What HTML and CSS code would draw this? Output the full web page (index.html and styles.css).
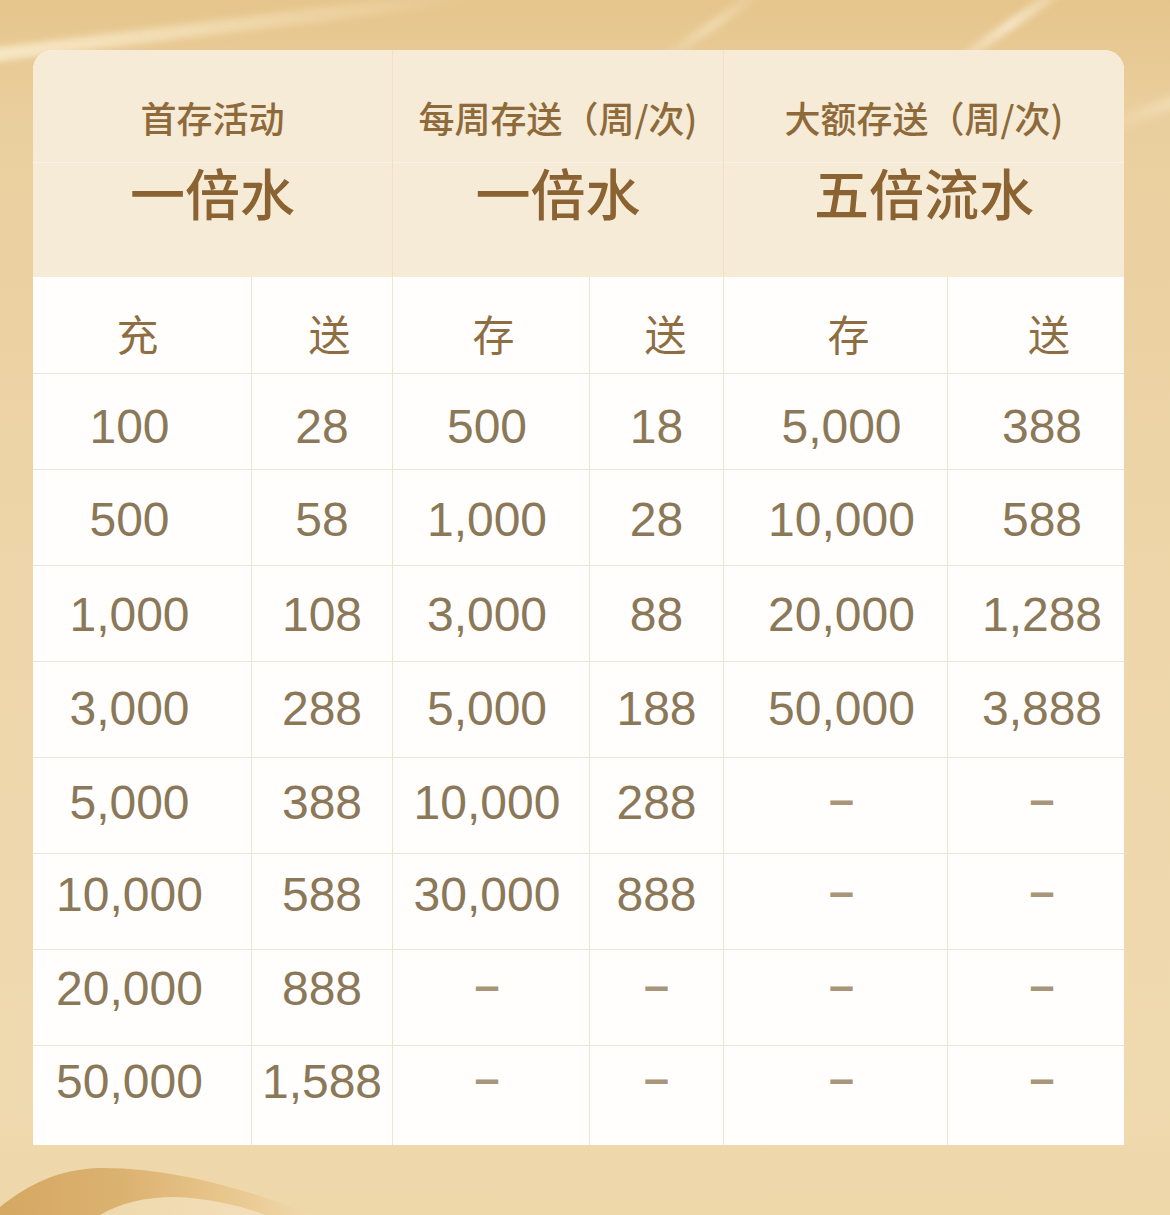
FILE: index.html
```html
<!DOCTYPE html>
<html lang="zh">
<head>
<meta charset="utf-8">
<link rel="stylesheet" href="styles.css">
</head>
<body>
<div class="page">
  <div class="streak s1"></div>
  <div class="streak s2"></div>
  <div class="streak s3"></div>
  <div class="streak s4"></div>
  <svg class="ribbon" width="340" height="60" viewBox="0 0 340 60">
    <defs>
      <linearGradient id="rg" x1="0" y1="0" x2="1" y2="0">
        <stop offset="0" stop-color="#d5a862"/>
        <stop offset="0.4" stop-color="#dcb271"/>
        <stop offset="0.75" stop-color="#e9c88f"/>
        <stop offset="1" stop-color="#f0d9ae"/>
      </linearGradient>
      <linearGradient id="rg2" x1="0" y1="0" x2="1" y2="0">
        <stop offset="0" stop-color="#efd8ac"/>
        <stop offset="1" stop-color="#f2dfba"/>
      </linearGradient>
    </defs>
    <path d="M0 52 C 30 28, 60 14, 100 13 C 170 12, 250 35, 312 60 L 0 60 Z" fill="url(#rg)"/>
    <path d="M100 60 C 120 48, 145 42, 175 42 C 210 43, 245 52, 265 60 Z" fill="url(#rg2)"/>
  </svg>

  <div class="card">
    <div class="head">
      <div class="group">
        <div class="label">首存活动</div>
        <div class="big">一倍水</div>
      </div>
      <div class="group">
        <div class="label">每周存送（周/次)</div>
        <div class="big">一倍水</div>
      </div>
      <div class="group">
        <div class="label">大额存送（周/次)</div>
        <div class="big">五倍流水</div>
      </div>
    </div>
    <div class="grid">
      <div class="row r0">
        <div class="c th c1">充</div><div class="c th c2">送</div><div class="c th c3">存</div><div class="c th c4">送</div><div class="c th c5">存</div><div class="c th c6">送</div>
      </div>
      <div class="row r1">
        <div class="c c1">100</div><div class="c c2">28</div><div class="c c3">500</div><div class="c c4">18</div><div class="c c5">5,000</div><div class="c c6">388</div>
      </div>
      <div class="row r2">
        <div class="c c1">500</div><div class="c c2">58</div><div class="c c3">1,000</div><div class="c c4">28</div><div class="c c5">10,000</div><div class="c c6">588</div>
      </div>
      <div class="row r3">
        <div class="c c1">1,000</div><div class="c c2">108</div><div class="c c3">3,000</div><div class="c c4">88</div><div class="c c5">20,000</div><div class="c c6">1,288</div>
      </div>
      <div class="row r4">
        <div class="c c1">3,000</div><div class="c c2">288</div><div class="c c3">5,000</div><div class="c c4">188</div><div class="c c5">50,000</div><div class="c c6">3,888</div>
      </div>
      <div class="row r5">
        <div class="c c1">5,000</div><div class="c c2">388</div><div class="c c3">10,000</div><div class="c c4">288</div><div class="c c5 d">–</div><div class="c c6 d">–</div>
      </div>
      <div class="row r6">
        <div class="c c1">10,000</div><div class="c c2">588</div><div class="c c3">30,000</div><div class="c c4">888</div><div class="c c5 d">–</div><div class="c c6 d">–</div>
      </div>
      <div class="row r7">
        <div class="c c1">20,000</div><div class="c c2">888</div><div class="c c3 d">–</div><div class="c c4 d">–</div><div class="c c5 d">–</div><div class="c c6 d">–</div>
      </div>
      <div class="row r8">
        <div class="c c1">50,000</div><div class="c c2">1,588</div><div class="c c3 d">–</div><div class="c c4 d">–</div><div class="c c5 d">–</div><div class="c c6 d">–</div>
      </div>
    </div>
  </div>
</div>
</body>
</html>
```

FILE: styles.css
```css
* { box-sizing: border-box; }
html, body { margin: 0; padding: 0; }
body {
  width: 1170px;
  height: 1215px;
  overflow: hidden;
  font-family: "Liberation Sans", "Noto Sans CJK SC", sans-serif;
}
.page {
  position: relative;
  width: 1170px;
  height: 1215px;
  padding: 50px 0 0 33px;
  background:
    linear-gradient(180deg, #e6c58c 0%, #eacf9e 10%, #eed6aa 50%, #efd9ae 90%, #eed7a9 100%);
}
.streak {
  position: absolute;
  pointer-events: none;
}
.s1 {
  left: -40px; top: 20px;
  width: 520px; height: 14px;
  transform: rotate(-7deg);
  background: linear-gradient(90deg, rgba(250,236,205,0.9), rgba(246,228,190,0.4) 70%, rgba(246,228,190,0));
  filter: blur(3px);
}
.s2 {
  left: 1090px; top: 100px;
  width: 140px; height: 14px;
  transform: rotate(-20deg);
  background: linear-gradient(90deg, rgba(248,232,200,0), rgba(248,232,200,0.8));
  filter: blur(3px);
}
.s3 {
  left: 920px; top: 20px;
  width: 180px; height: 10px;
  transform: rotate(-35deg);
  background: linear-gradient(90deg, rgba(248,232,200,0), rgba(248,234,205,0.85), rgba(248,232,200,0));
  filter: blur(3px);
}
.s4 {
  left: 640px; top: 22px;
  width: 140px; height: 10px;
  transform: rotate(-35deg);
  background: linear-gradient(90deg, rgba(248,232,200,0), rgba(246,230,196,0.6), rgba(248,232,200,0));
  filter: blur(3px);
}
.ribbon {
  position: absolute;
  left: 0; bottom: 0;
}
.card {
  position: relative;
  width: 1091px;
  border-radius: 20px 20px 0 0;
  overflow: hidden;
  background: #fffefc;
}
.head {
  display: grid;
  grid-template-columns: 360px 331px 400px;
  height: 227px;
  background: #f6ebd7;
}
.group {
  display: flex;
  flex-direction: column;
  align-items: center;
  border-right: 1px solid #efe1c6;
  font-family: "Noto Sans CJK SC", sans-serif;
}
.group:last-child { border-right: none; }
.label {
  width: 100%;
  text-align: center;
  height: 113px;
  padding-top: 44px;
  font-size: 36px;
  line-height: 46px;
  font-weight: 500;
  color: #8e6a3b;
  border-bottom: 1px solid #f9f2e6;
}
.big {
  font-size: 55px;
  line-height: 60px;
  font-weight: 500;
  color: #8b6332;
  margin-top: -2px;
}
.grid {
  display: grid;
  grid-template-columns: 219px 141px 197px 134px 224px 176px;
  grid-template-rows: 97px repeat(7, 96px) 99px;
}
.row { display: contents; }
.c {
  display: flex;
  align-items: center;
  justify-content: center;
  font-size: 48px;
  color: #8b7858;
  border-right: 1px solid #eee4d2;
  border-bottom: 1px solid #eee4d2;
}
.c6 { border-right: none; }
.r8 > .c { border-bottom: none; }
.c1 { padding-right: 25px; }
.c3 { padding-right: 8px; }
.c5 { padding-left: 12px; }
.c6 { padding-left: 12px; }

/* per-row vertical offsets of the text */
.r1 > .c { padding-top: 10px; }
.r2 > .c { padding-top: 4px; }
.r3 > .c { padding-top: 1px; }
.r4 > .c { padding-bottom: 2px; }
.r5 > .c { padding-bottom: 7px; }
.r6 > .c { padding-bottom: 15px; }
.r7 > .c { padding-bottom: 19px; }
.r8 > .c { padding-bottom: 29px; }

.th {
  font-family: "Noto Sans CJK SC", sans-serif;
  font-size: 42px;
  color: #8f6d42;
  padding-top: 14px;
  padding-bottom: 0;
}
.th.c1 { padding-left: 0; padding-right: 9px; }
.th.c2 { padding-left: 15px; }
.th.c3 { padding-left: 5px; padding-right: 0; }
.th.c4 { padding-left: 18px; }
.th.c5 { padding-left: 26px; }
.th.c6 { padding-left: 26px; }
.d {
  color: #a8957a;
  font-size: 45px;
  font-weight: 700;
}
.r5 > .d { padding-bottom: 12px; }
.r6 > .d { padding-bottom: 20px; }
.r7 > .d { padding-bottom: 24px; }
.r8 > .d { padding-bottom: 34px; }
```
